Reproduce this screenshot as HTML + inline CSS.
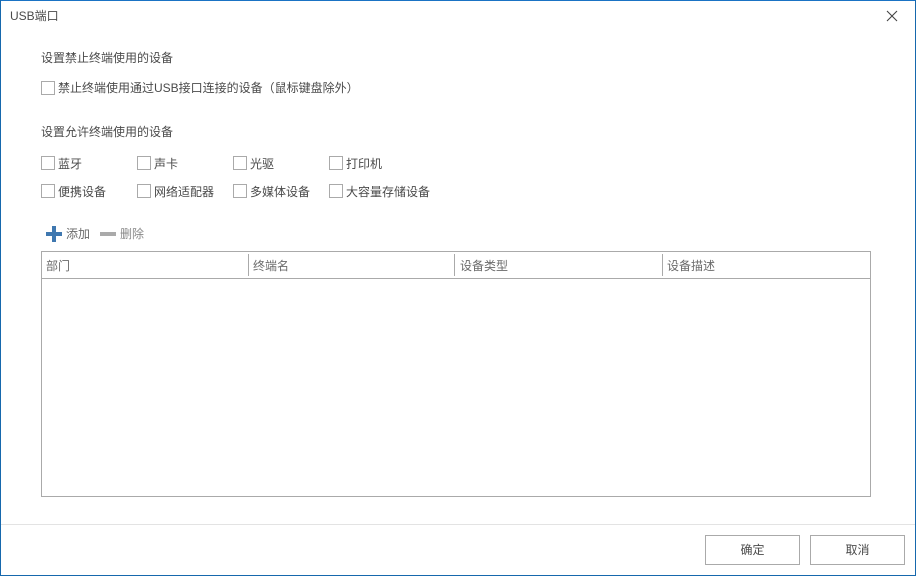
<!DOCTYPE html>
<html lang="zh">
<head>
<meta charset="utf-8">
<style>
html,body{margin:0;padding:0;background:#fff;}
#w{position:relative;width:916px;height:576px;overflow:hidden;background:#fff;box-sizing:border-box;
font-family:"Liberation Sans","Microsoft YaHei","Noto Sans CJK SC",sans-serif;font-size:12px;color:#4a4a4a;}
#w div{position:absolute;white-space:nowrap;}
.b{background:#1668ad;}
.t{line-height:16px;height:16px;}
.c{width:12px;height:12px;border:1px solid #aaa;background:#fff;}
.h{color:#6a6a6a;}
.btn{border:1px solid #aaa;width:93px;height:28px;line-height:29px;text-align:center;background:#fff;color:#4a4a4a;}
</style>
</head>
<body>
<div id="w">
<div class="b" style="left:0;top:0;width:916px;height:1px;background:#1a73c4"></div>
<div class="b" style="left:0;top:575px;width:916px;height:1px"></div>
<div class="b" style="left:0;top:0;width:1px;height:576px"></div>
<div class="b" style="left:915px;top:0;width:1px;height:576px"></div>

<div class="t" style="left:10px;top:8px">USB端口</div>
<svg style="position:absolute;left:886px;top:10px" width="12" height="12" viewBox="0 0 12 12"><path d="M1 1L11 11M11 1L1 11" stroke="#444" stroke-width="1.1" fill="none"/></svg>

<div class="t" style="left:41px;top:50px">设置禁止终端使用的设备</div>
<div class="c" style="left:41px;top:81px"></div>
<div class="t" style="left:58px;top:80px">禁止终端使用通过USB接口连接的设备（鼠标键盘除外）</div>

<div class="t" style="left:41px;top:124px">设置允许终端使用的设备</div>

<div class="c" style="left:41px;top:156px"></div><div class="t" style="left:58px;top:156px">蓝牙</div>
<div class="c" style="left:137px;top:156px"></div><div class="t" style="left:154px;top:156px">声卡</div>
<div class="c" style="left:233px;top:156px"></div><div class="t" style="left:250px;top:156px">光驱</div>
<div class="c" style="left:329px;top:156px"></div><div class="t" style="left:346px;top:156px">打印机</div>

<div class="c" style="left:41px;top:184px"></div><div class="t" style="left:58px;top:184px">便携设备</div>
<div class="c" style="left:137px;top:184px"></div><div class="t" style="left:154px;top:184px">网络适配器</div>
<div class="c" style="left:233px;top:184px"></div><div class="t" style="left:250px;top:184px">多媒体设备</div>
<div class="c" style="left:329px;top:184px"></div><div class="t" style="left:346px;top:184px">大容量存储设备</div>

<div style="left:46px;top:232px;width:16px;height:4px;background:#3f78b0"></div>
<div style="left:52px;top:226px;width:4px;height:16px;background:#3f78b0"></div>
<div class="t h" style="left:66px;top:226px">添加</div>
<div style="left:100px;top:232px;width:16px;height:4px;background:#aaa"></div>
<div class="t" style="left:120px;top:226px;color:#888">删除</div>

<div style="left:41px;top:251px;width:828px;height:244px;border:1px solid #aaa;background:#fff"></div>
<div style="left:42px;top:278px;width:828px;height:1px;background:#aaa"></div>
<div style="left:248px;top:254px;width:1px;height:22px;background:#aaa"></div>
<div style="left:454px;top:254px;width:1px;height:22px;background:#aaa"></div>
<div style="left:662px;top:254px;width:1px;height:22px;background:#aaa"></div>
<div class="t h" style="left:46px;top:258px">部门</div>
<div class="t h" style="left:253px;top:258px">终端名</div>
<div class="t h" style="left:460px;top:258px">设备类型</div>
<div class="t h" style="left:667px;top:258px">设备描述</div>

<div style="left:1px;top:524px;width:914px;height:1px;background:#e3e3e3"></div>
<div class="btn" style="left:705px;top:535px">确定</div>
<div class="btn" style="left:810px;top:535px">取消</div>
</div>
</body>
</html>
